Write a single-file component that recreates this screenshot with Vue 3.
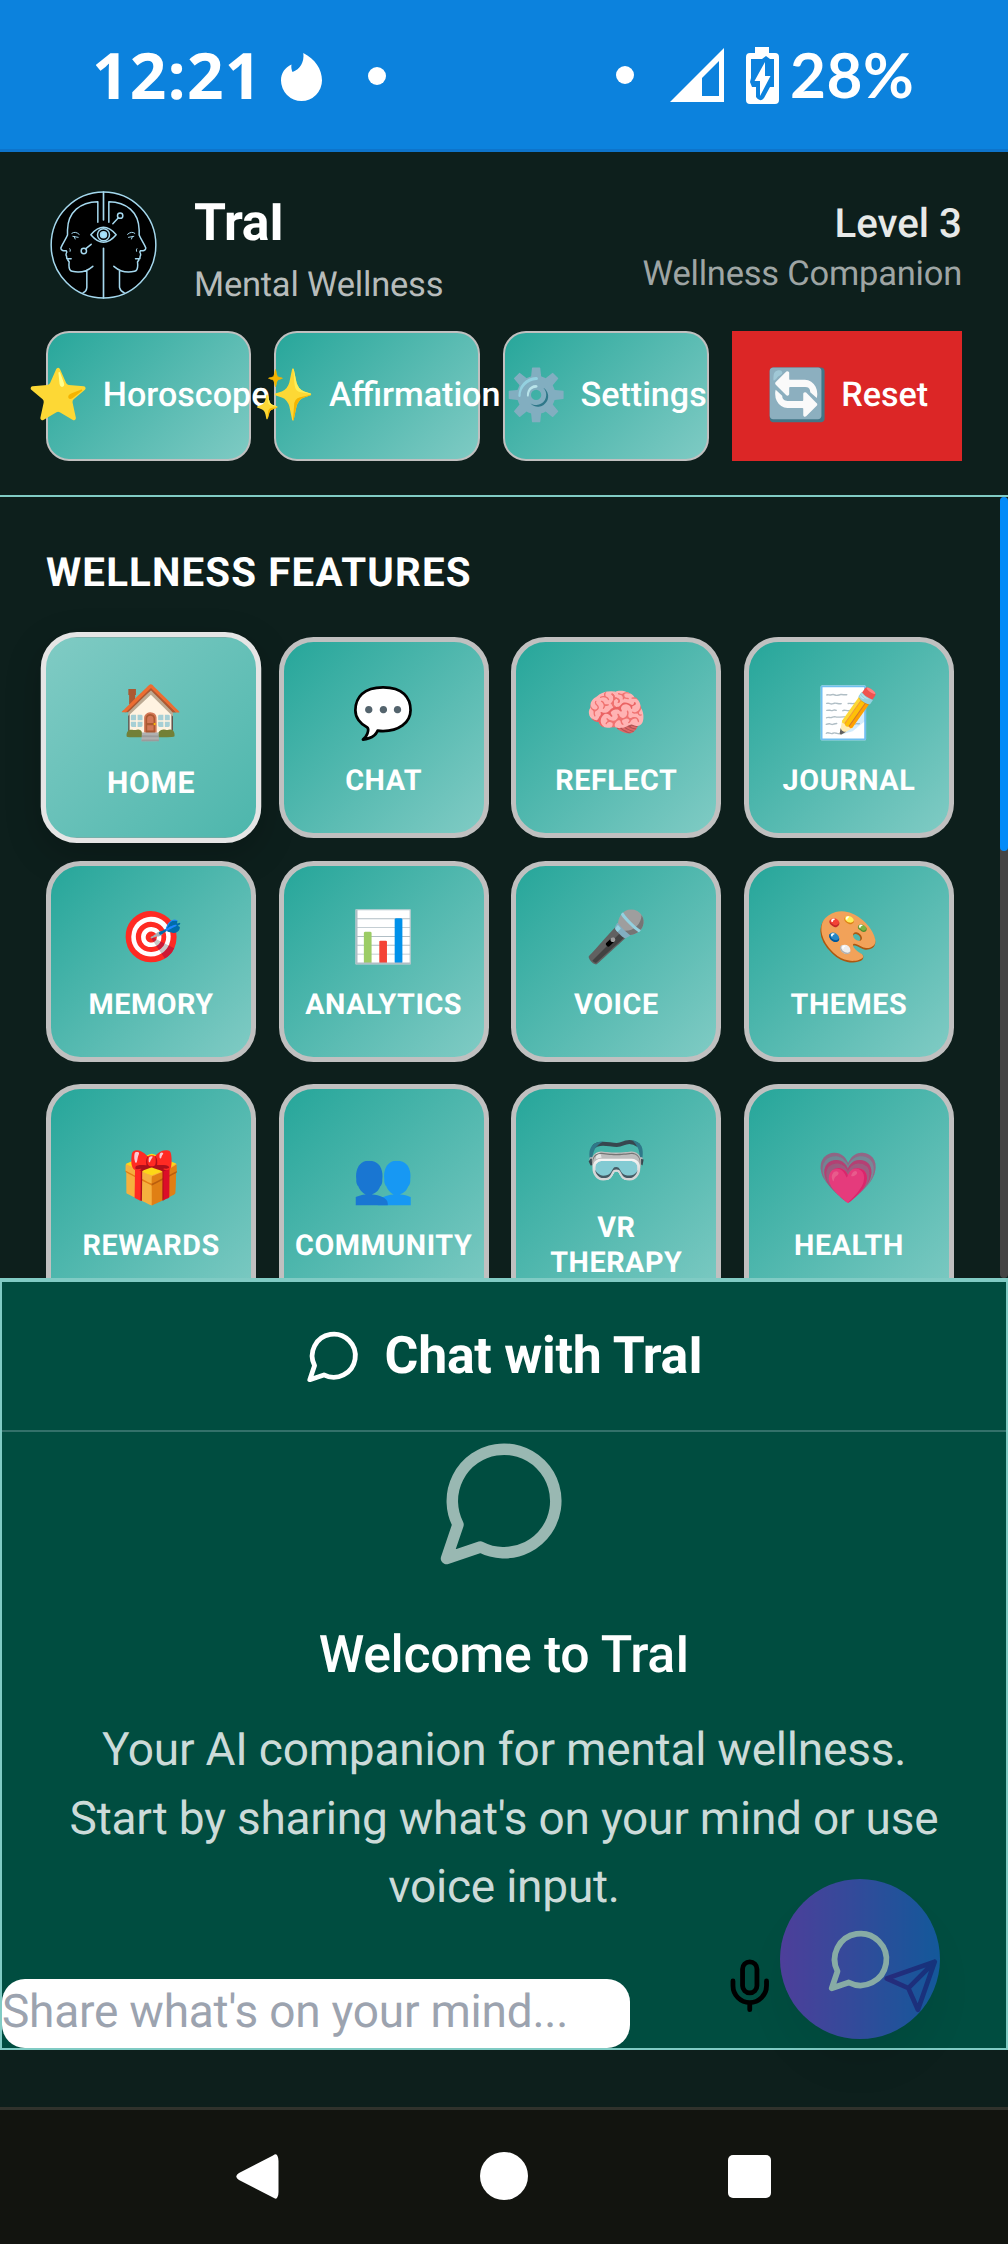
<script setup>
const actions = [
  { icon: '⭐', label: 'Horoscope' },
  { icon: '✨', label: 'Affirmation' },
  { icon: '⚙️', label: 'Settings' },
  { icon: '🔄', label: 'Reset', danger: true },
]

const features = [
  { icon: '🏠', label: 'HOME', active: true },
  { icon: '💬', label: 'CHAT' },
  { icon: '🧠', label: 'REFLECT' },
  { icon: '📝', label: 'JOURNAL' },
  { icon: '🎯', label: 'MEMORY' },
  { icon: '📊', label: 'ANALYTICS' },
  { icon: '🎤', label: 'VOICE' },
  { icon: '🎨', label: 'THEMES' },
  { icon: '🎁', label: 'REWARDS' },
  { icon: '👥', label: 'COMMUNITY' },
  { icon: '🥽', label: 'VR THERAPY' },
  { icon: '💗', label: 'HEALTH' },
]
</script>

<template>
  <div class="screen">
    <div class="status">
      <div class="status-side">
        <span class="clock">12:21</span>
        <svg class="flame" viewBox="0 0 41 48">
          <path d="M22.300 0C34 6 41 16 41 27.500A20.500 20.500 0 0 1 0 27.500C0 20 4 14.500 10.500 11.500C10 14 10.500 16.500 11.500 19C19 16.500 23.500 9 22.300 0Z" fill="#fff" />
        </svg>
        <i class="dot"></i>
      </div>
      <div class="status-side">
        <i class="dot"></i>
        <svg class="signal" viewBox="0 0 54 54">
          <path fill-rule="evenodd" fill="#fff" d="M54 0V54H0ZM49 13L32 30V48H49Z" />
        </svg>
        <svg class="battery" viewBox="0 0 33 57">
          <path fill="#fff" fill-rule="evenodd" d="M9 0H23V6H29Q33 6 33 10V53Q33 57 29 57H4Q0 57 0 53V10Q0 6 4 6H9ZM5 12V31L4 35L6 40H10V50Q14 56 18 51L24 40H28V12H24L20 9L16 12Z" />
          <path fill="#fff" d="M19 15V29H24.500L14 49V34H8.500Z" />
        </svg>
        <span class="percent">28%</span>
      </div>
    </div>

    <header class="header">
      <div class="brand-row">
        <svg class="logo" viewBox="59 33 320 324" fill="none" stroke="#a5d8ee" stroke-width="4.500" stroke-linejoin="round" stroke-linecap="round">
          <ellipse cx="219" cy="195" rx="157" ry="159" fill="#000" />
          <path d="M219 36V120M219 205V354" stroke-width="5" />
          <path d="M202 127V65C150 66 112 95 111 150V165C106 178 96 190 91 204C91 212 100 213 107 212L109 216C106 222 106 226 108 228L109 236H122M112 240L116 246C114 262 116 272 125 274C150 280 172 272 187 259M169 270V322Q168 334 158 338" />
          <path d="M235 127V65C287 66 325 95 326 150V165C331 178 341 190 346 204C346 212 337 213 330 212L328 216C331 222 331 226 329 228L328 236H315M325 240L321 246C323 262 321 272 312 274C287 280 265 272 250 259M267 270V322Q270 334 281 338" />
          <path d="M124 160Q134 152 146 163M127 169L143 172M131 169L134 177M119 214Q121 209 118 206" stroke-width="3" />
          <path d="M313 160Q303 152 291 163M310 169L294 172M306 169L303 177M318 214Q316 209 319 206" stroke-width="3" />
          <path d="M181 164Q219 119 257 164Q219 209 181 164Z" />
          <circle cx="219" cy="164" r="18" />
          <circle cx="219" cy="164" r="9" fill="#a5e4ff" />
          <circle cx="269" cy="107" r="8" /><path d="M263 114L247 131" />
          <circle cx="160" cy="213" r="8" /><path d="M166 206L182 193" />
        </svg>
        <div class="brand">
          <h1>TraI</h1>
          <p>Mental Wellness</p>
        </div>
        <div class="level">
          <strong>Level 3</strong>
          <span>Wellness Companion</span>
        </div>
      </div>
      <div class="actions">
        <button v-for="a in actions" :key="a.label" class="action" :class="{ danger: a.danger }">
          <span class="emoji">{{ a.icon }}</span><span class="action-label">{{ a.label }}</span>
        </button>
      </div>
    </header>

    <section class="features">
      <div class="features-body">
        <h2>WELLNESS FEATURES</h2>
        <div class="grid">
          <div v-for="f in features" :key="f.label" class="card" :class="{ active: f.active }">
            <span class="emoji">{{ f.icon }}</span>
            <span class="card-label">{{ f.label }}</span>
          </div>
        </div>
      </div>
      <div class="track"><div class="thumb"></div></div>
    </section>

    <section class="chat">
      <div class="chat-head">
        <svg class="icon" viewBox="0 0 24 24"><path d="M7.900 20A9 9 0 1 0 4 16.100L2 22Z" /></svg>
        <h2>Chat with TraI</h2>
      </div>
      <div class="chat-body">
        <svg class="icon big" viewBox="0 0 24 24"><path d="M7.900 20A9 9 0 1 0 4 16.100L2 22Z" /></svg>
        <h3>Welcome to TraI</h3>
        <p>Your AI companion for mental wellness. Start by sharing what's on your mind or use voice input.</p>
      </div>
      <div class="composer">
        <input type="text" placeholder="Share what's on your mind..." />
        <svg class="icon mic" viewBox="0 0 24 24">
          <path d="M12 2a3 3 0 0 0-3 3v7a3 3 0 0 0 6 0V5a3 3 0 0 0-3-3ZM19 10v2a7 7 0 0 1-14 0v-2M12 19v3" />
        </svg>
        <svg class="icon send" viewBox="0 0 24 24"><path d="m22 2-7 20-4-9-9-4ZM22 2 11 13" /></svg>
      </div>
      <div class="fab">
        <svg class="icon" viewBox="0 0 24 24"><path d="M7.900 20A9 9 0 1 0 4 16.100L2 22Z" /></svg>
      </div>
    </section>

    <nav class="nav">
      <svg viewBox="0 0 43 47"><path d="M37 2.500Q40.500 0 41.500 3Q42.500 5 42.500 8V39Q42.500 42 41.500 44Q40.500 47 37 44.500L3 27Q-2.500 23.500 3 20Z" fill="#fff" /></svg>
      <i class="home"></i>
      <i class="recent"></i>
    </nav>
  </div>
</template>

<style>
body { background: #0d1f1c; }
</style>

<style scoped>
* { box-sizing: border-box; margin: 0; }
.screen {
  width: 1008px;
  height: 2244px;
  display: flex;
  flex-direction: column;
  overflow: hidden;
  background: #0d1f1c;
  color: #fff;
  font-family: Roboto, sans-serif;
  text-rendering: geometricPrecision;
}

.status {
  height: 152px;
  flex: none;
  background: #0c82dd;
  border-bottom: 3px solid #0d74cb;
  font-family: Lato, sans-serif;
  font-weight: 700;
  display: flex;
  justify-content: space-between;
  padding: 0 92px;
}
.status-side { display: flex; align-items: center; height: 150px; }
.clock { font-family: "Open Sans", sans-serif; font-size: 64px; letter-spacing: 1.2px; line-height: 76px; width: 189px; }
.flame { width: 41px; height: 48px; margin-top: 3px; }
.dot { width: 18px; height: 18px; border-radius: 50%; background: #fff; margin: 2px 0 0 46px; }
.status-side:last-child .dot { margin: 0 36px 0 0; }
.signal { width: 54px; height: 54px; margin-right: 22px; }
.battery { width: 33px; height: 57px; margin-right: 11px; }
.percent { font-size: 62px; letter-spacing: .5px; line-height: 76px; width: 126px; }

.header {
  height: 345px;
  flex: none;
  padding: 34px 46px;
  border-bottom: 2px solid #80cbc4;
}
.brand-row { display: flex; height: 145px; }
.logo { width: 107px; height: 108px; margin: 5px 37px 0 4px; flex: none; }
.brand h1 { font-size: 51.75px; font-weight: 700; line-height: 72px; padding-top: 1px; letter-spacing: -.4px; }
.brand p { font-size: 34.5px; line-height: 52px; color: #b7bcbb; letter-spacing: -.22px; }
.level { margin-left: auto; text-align: right; display: flex; flex-direction: column; }
.level strong { font-size: 40.25px; font-weight: 500; line-height: 60px; color: #e7e9e8; margin-top: 8px; }
.level span { font-size: 34.5px; line-height: 44px; color: #9ea5a4; margin-top: -2px; letter-spacing: -.22px; }
.actions { display: grid; grid-template-columns: 205px 206px 206px 230px; gap: 23px; height: 130px; }
.action {
  display: flex;
  align-items: center;
  justify-content: center;
  gap: 13px;
  padding: 0;
  min-width: 0;
  border: 2px solid #c0c0c0;
  border-radius: 23px;
  background: linear-gradient(135deg, #26a69a, #80cbc4) border-box;
  color: #fff;
  font-family: inherit;
  font-size: 34.1px;
  font-weight: 500;
  white-space: nowrap;
  text-rendering: inherit;
}
.action.danger { background: #dc2626; border: 0; border-radius: 0; }
.action-label { padding-bottom: 3px; }
.emoji { font-family: "Noto Color Emoji", sans-serif; font-size: 50px; line-height: 58px; font-weight: 400; }

.features { height: 781px; flex: none; display: flex; overflow: hidden; }
.features-body { width: 1000px; padding: 47px 46px 0; }
.features h2 { font-size: 40.25px; font-weight: 700; line-height: 58px; letter-spacing: 1.15px; margin-bottom: 35px; }
.grid { display: grid; grid-template-columns: repeat(4, minmax(0, 1fr)); gap: 22.500px; }
.card {
  position: relative;
  display: flex;
  flex-direction: column;
  align-items: center;
  justify-content: center;
  gap: 21px;
  padding: 43px 15px 34px;
  border: 5px solid #c0c0c0;
  border-radius: 34.500px;
  background: linear-gradient(135deg, #26a69a, #80cbc4);
  text-align: center;
}
.card.active {
  background: linear-gradient(135deg, #80cbc4, #4db6ac);
  border-color: #e5e5e5;
  transform: scale(1.050);
  box-shadow: 0 11px 34px rgba(0, 0, 0, .2);
}
.card-label { font-size: 28.750px; font-weight: 700; line-height: 35px; letter-spacing: .57px; }
.track { width: 8px; background: #444; border-radius: 4px; }
.thumb { height: 354px; border-radius: 4px; background: #048bf8; }

.chat {
  position: relative;
  height: 772px;
  flex: none;
  display: flex;
  flex-direction: column;
  background: #004d40;
  border: 2px solid #80cbc4;
  border-top-width: 4px;
}
.icon { fill: none; stroke: currentColor; stroke-width: 2; stroke-linecap: round; stroke-linejoin: round; width: 57.500px; height: 57.500px; flex: none; }
.chat-head { height: 150px; flex: none; display: flex; align-items: center; justify-content: center; gap: 22px; border-bottom: 2px solid #33716a; }
.chat-head h2 { font-size: 51.750px; font-weight: 700; line-height: 72px; letter-spacing: -.25px; }
.chat-body { flex: 1; display: flex; flex-direction: column; align-items: center; text-align: center; }
.big { width: 138px; height: 138px; color: #99b8b2; }
.chat-body h3 { font-size: 51.750px; font-weight: 500; line-height: 72px; margin-top: 49px; letter-spacing: -.3px; }
.chat-body p { font-size: 46px; line-height: 68.700px; width: 912px; margin-top: 25px; color: #ccdbd9; letter-spacing: -.22px; }
.composer { height: 94px; flex: none; display: flex; }
.composer input {
  width: 628px;
  height: 69px;
  margin-top: 25px;
  padding: 0 0 4px;
  border: 0;
  border-radius: 23px;
  background: #fff;
  font-family: inherit;
  font-size: 46px;
  letter-spacing: -.22px;
  text-rendering: inherit;
}
.composer input::placeholder { color: #9ca3af; opacity: 1; }
.mic { margin: 3px 0 0 91px; color: #000; }
.send { margin: 3px 0 0 103px; color: #000; }
.fab {
  position: absolute;
  left: 778px;
  top: 597px;
  width: 160px;
  height: 160px;
  border-radius: 50%;
  display: flex;
  align-items: center;
  justify-content: center;
  background: linear-gradient(90deg, #9333ea, #2563eb);
  box-shadow: 0 29px 43px -9px rgba(0, 0, 0, .100);
  opacity: .530;
}
.fab .icon { width: 69px; height: 69px; }

.nav {
  height: 137px;
  margin-top: 57px;
  flex: none;
  background: #12140f;
  border-top: 3px solid #30322c;
  display: flex;
  align-items: center;
  padding: 0 237px 2px 236px;
  justify-content: space-between;
}
.nav svg { width: 43px; height: 47px; }
.home { width: 48px; height: 48px; border-radius: 50%; background: #fff; }
.recent { width: 43px; height: 43px; border-radius: 5px; background: #fff; }
</style>
